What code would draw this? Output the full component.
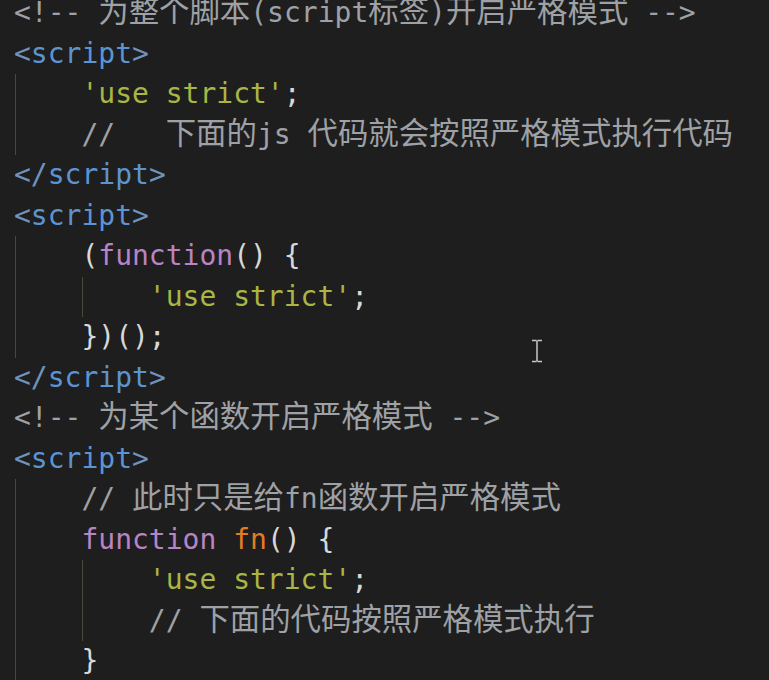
import React from "react";

type Tok = [string, string];

const C = {
  cm: "text-[#9ea1a5]",
  tag: "text-[#5c94d2]",
  br: "text-[#6f93bd]",
  str: "text-[#a9b544]",
  kw: "text-[#b884c6]",
  fn: "text-[#e47a22]",
  p: "text-[#d8d8d8]",
};

const lines: { toks: Tok[]; guides: number[] }[] = [
  { toks: [["<!-- 为整个脚本(script标签)开启严格模式 -->", C.cm]], guides: [] },
  { toks: [["<", C.br], ["script", C.tag], [">", C.br]], guides: [] },
  { toks: [["    ", C.p], ["'use strict'", C.str], [";", C.p]], guides: [0] },
  { toks: [["    //   下面的js 代码就会按照严格模式执行代码", C.cm]], guides: [0] },
  { toks: [["</", C.br], ["script", C.tag], [">", C.br]], guides: [] },
  { toks: [["<", C.br], ["script", C.tag], [">", C.br]], guides: [] },
  { toks: [["    (", C.p], ["function", C.kw], ["() {", C.p]], guides: [0] },
  { toks: [["        ", C.p], ["'use strict'", C.str], [";", C.p]], guides: [0, 1] },
  { toks: [["    })();", C.p]], guides: [0] },
  { toks: [["</", C.br], ["script", C.tag], [">", C.br]], guides: [] },
  { toks: [["<!-- 为某个函数开启严格模式 -->", C.cm]], guides: [] },
  { toks: [["<", C.br], ["script", C.tag], [">", C.br]], guides: [] },
  { toks: [["    // 此时只是给fn函数开启严格模式", C.cm]], guides: [0] },
  { toks: [["    ", C.p], ["function", C.kw], [" ", C.p], ["fn", C.fn], ["() {", C.p]], guides: [0] },
  { toks: [["        ", C.p], ["'use strict'", C.str], [";", C.p]], guides: [0, 1] },
  { toks: [["        // 下面的代码按照严格模式执行", C.cm]], guides: [0, 1] },
  { toks: [["    }", C.p]], guides: [0] },
];

const cjkRe = /([\u3400-\u9fff\uff00-\uffef]+)/;

function renderText(text: string) {
  return text.split(cjkRe).map((part, i) =>
    cjkRe.test(part) ? (
      <span
        key={i}
        className="text-[30.4px] leading-none"
        style={{ fontFamily: '"Noto Sans CJK SC", sans-serif' }}
      >
        {part}
      </span>
    ) : (
      <React.Fragment key={i}>{part}</React.Fragment>
    )
  );
}

export default function App() {
  return (
    <div className="w-[769px] h-[680px] bg-[#1e1e1e] overflow-hidden relative">
      <div
        className="-mt-[7px] pl-[14px] text-[28px] whitespace-pre"
        style={{ fontFamily: '"DejaVu Sans Mono", "Noto Sans CJK SC", monospace' }}
      >
        {lines.map((l, i) => (
          <div key={i} className="relative h-[40.5px] leading-[40.5px]">
            {l.guides.map((g) => (
              <span
                key={g}
                className={`absolute top-0 bottom-0 w-px bg-[#4a4939] ${g === 0 ? "left-[1px]" : "left-[68px]"}`}
              />
            ))}
            {l.toks.map(([t, c], j) => (
              <span key={j} className={c}>
                {renderText(t)}
              </span>
            ))}
          </div>
        ))}
      </div>
      <svg
        className="absolute left-[530px] top-[339px]"
        width="14"
        height="24"
        viewBox="0 0 14 24"
      >
        <path d="M2 1.5h4M8 1.5h4M7 2v20M2 22.5h4M8 22.5h4" stroke="#1e1e1e" strokeWidth="3" fill="none" />
        <path d="M2 1.5h4.5M7.5 1.5h4.5M7 1.5v21M2 22.5h4.5M7.5 22.5h4.5" stroke="#c8c8c8" strokeWidth="1.5" fill="none" />
      </svg>
    </div>
  );
}
